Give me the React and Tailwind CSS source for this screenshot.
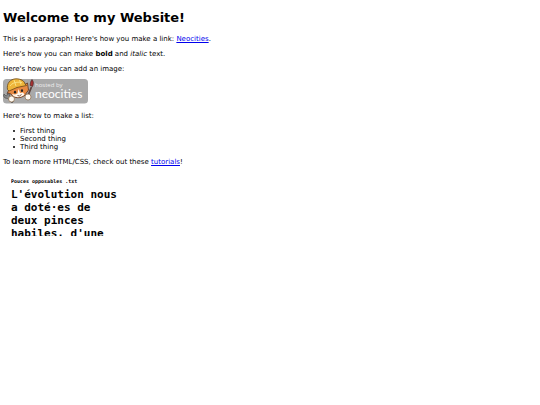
import React from 'react';

const things = ['First thing', 'Second thing', 'Third thing'];

const HostedBadge = () => (
  <svg viewBox="0 0 85 26" className="block h-[26px] w-[85px]" role="img" aria-label="Hosted by Neocities">
    <rect x="0" y="1" width="85" height="24.5" rx="3.5" fill="#a9a9a9" />

    {/* wrench */}
    <path d="M1 16 L3 18 L4.5 17 L4 15 L6.5 16.5 L6.5 19 L11 23 L9 25 L4.5 20.5 L2 20 L0.5 18 Z" fill="#888" stroke="#444" strokeWidth="0.6" />

    {/* brush */}
    <path d="M28.5 9 L24 20" stroke="#5e4540" strokeWidth="1.8" />
    <path d="M29 1.5 C31 4 30.5 6 29.5 8.5 L27.2 7.5 C27.2 5.5 27.5 3.5 29 1.5 Z" fill="#a83232" stroke="#3a2020" strokeWidth="0.6" />

    {/* cat */}
    <path d="M6 11 L4.5 15 L8 16 C10 20.5 18 21 22 17 L25.5 12 L24.5 5 L21 7 Z" fill="#e88a42" stroke="#5a3420" strokeWidth="0.8" />
    <path d="M9 16 C11 20 18 20.5 21.5 16.5 L20 14.5 L17 15 L15.5 11 L14.5 15.5 L12 16.5 Z" fill="#fff6ec" />
    <path d="M4.5 11.5 C3.5 5.5 7 1 13 0.8 C18 0.8 21.5 3 22 6 L23.5 7.5 L14 9.5 L6 13 Z" fill="#eeb53a" stroke="#6b4818" strokeWidth="0.8" />
    <path d="M7 8 C9 5 13 3.5 19 4.5 M11 2 L13 8 M16.5 2 L18 6.5" fill="none" stroke="#fbe48a" strokeWidth="0.9" />
    <ellipse cx="12" cy="14.2" rx="1.1" ry="1.4" fill="#222" />
    <ellipse cx="19" cy="12.7" rx="1.1" ry="1.4" fill="#222" />
    <path d="M14.5 17.5 L16.5 18 L18.5 16.5" fill="none" stroke="#5a3420" strokeWidth="0.8" />

    {/* paws */}
    <circle cx="8.5" cy="21" r="3" fill="#fffaf2" stroke="#8a6848" strokeWidth="0.7" />
    <circle cx="25" cy="19" r="3" fill="#fffaf2" stroke="#8a6848" strokeWidth="0.7" />

    <text x="32" y="9" fontSize="6" fill="#eee" className="font-['Open_Sans',sans-serif]">hosted by</text>
    <text x="32" y="20" fontSize="12" fill="#fff" className="font-['Liberation_Sans_Narrow','Lato',sans-serif]">neocities</text>
  </svg>
);

const TextPreview = () => (
  <section className="mt-[11px] ml-2 h-[59px] w-28 overflow-hidden font-['DejaVu_Sans_Mono',monospace] font-bold">
    <h2 className="text-[5px] leading-2">Pouces opposables .txt</h2>
    <p className="mt-[3px] text-[11px] leading-[13px]">
      L'évolution nous a doté·es de deux pinces habiles, d'une
    </p>
  </section>
);

const App = () => {
  return (
    <main className="px-[3px] pt-2 font-['DejaVu_Sans',sans-serif] text-[7px] leading-2 text-black">
      <h1 className="text-[13px] leading-5 font-bold">Welcome to my Website!</h1>

      <p className="mt-[7px]">
        This is a paragraph! Here's how you make a link:{' '}
        <a href="https://neocities.org" className="text-[#0000ee] underline">Neocities</a>.
      </p>

      <p className="mt-[7px]">
        Here's how you can make <strong>bold</strong> and <em>italic</em> text.
      </p>

      <p className="mt-[7px]">Here's how you can add an image:</p>

      <div className="mt-[5px]">
        <HostedBadge />
      </div>

      <p className="mt-2">Here's how to make a list:</p>

      <ul className="mt-[7px] pl-[10px]">
        {things.map((thing) => (
          <li key={thing} className="flex items-center gap-[5px] before:size-[2px] before:rounded-full before:bg-black">
            {thing}
          </li>
        ))}
      </ul>

      <p className="mt-[7px]">
        To learn more HTML/CSS, check out these{' '}
        <a href="https://neocities.org/tutorials" className="text-[#0000ee] underline">tutorials</a>!
      </p>

      <TextPreview />
    </main>
  );
};

export default App;
